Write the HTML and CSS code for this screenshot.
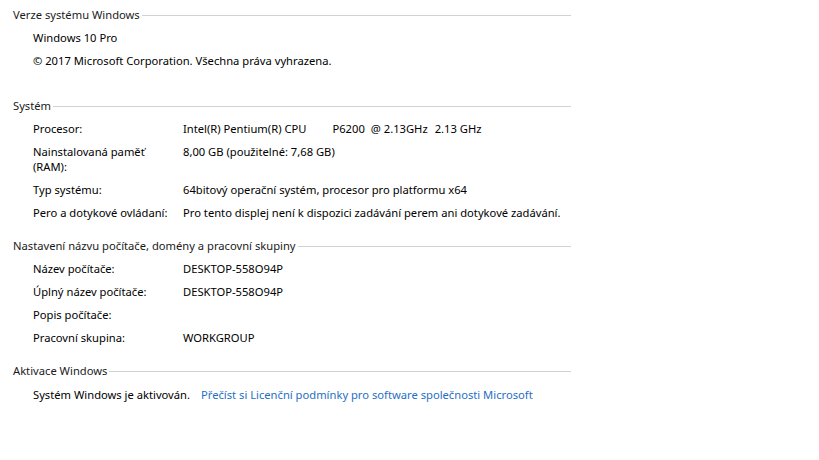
FILE: index.html
```html
<!DOCTYPE html>
<html lang="cs">
<head>
  <meta charset="UTF-8" />
  <title>Systém</title>
  <link rel="stylesheet" href="styles.css">
</head>
<body>

<section class="group first">
  <div class="group-head"><span>Verze systému Windows</span></div>
  <div class="plain">Windows 10 Pro</div>
  <div class="plain">© 2017 Microsoft Corporation. Všechna práva vyhrazena.</div>
</section>

<section class="group">
  <div class="group-head"><span>Systém</span></div>
  <div class="row">
    <div class="label">Procesor:</div>
    <div class="value cpu"><span>Intel(R) Pentium(R) CPU</span><span class="model">P6200</span><span class="at">@ 2.13GHz</span><span class="freq">2.13 GHz</span></div>
  </div>
  <div class="row"><div class="label">Nainstalovaná paměť (RAM):</div><div class="value">8,00 GB (použitelné: 7,68 GB)</div></div>
  <div class="row"><div class="label">Typ systému:</div><div class="value">64bitový operační systém, procesor pro platformu x64</div></div>
  <div class="row"><div class="label">Pero a dotykové ovládaní:</div><div class="value">Pro tento displej není k dispozici zadávání perem ani dotykové zadávání.</div></div>
</section>

<section class="group">
  <div class="group-head"><span>Nastavení názvu počítače, domény a pracovní skupiny</span></div>
  <div class="row"><div class="label">Název počítače:</div><div class="value">DESKTOP-558O94P</div></div>
  <div class="row"><div class="label">Úplný název počítače:</div><div class="value">DESKTOP-558O94P</div></div>
  <div class="row"><div class="label">Popis počítače:</div><div class="value"></div></div>
  <div class="row"><div class="label">Pracovní skupina:</div><div class="value">WORKGROUP</div></div>
</section>

<section class="group">
  <div class="group-head"><span>Aktivace Windows</span></div>
  <div class="plain activation">
    <span>Systém Windows je aktivován.</span>
    <a href="#" class="link">Přečíst si Licenční podmínky pro software společnosti Microsoft</a>
  </div>
</section>

</body>
</html>
```

FILE: styles.css
```css
body {
  margin: 0;
  padding: 7px 0 0 13px;
  background: #fff;
  color: #000;
  font-family: 'Noto Sans', sans-serif;
  font-size: 11.2px;
  line-height: 15px;
}

.group {
  width: 558px;
  margin-bottom: 18px;
}

.group.first {
  margin-bottom: 30px;
}

.group-head {
  display: flex;
  align-items: center;
  gap: 2px;
  color: #1a1a1a;
  height: 15px;
  margin-bottom: 4px;
}

.group-head span {
  white-space: nowrap;
}

.group-head::after {
  content: "";
  flex: 1;
  height: 1px;
  margin-top: 2px;
  background: #d2d2d2;
}

.plain,
.row {
  margin: 8px 0 0 20px;
}

.row {
  display: grid;
  grid-template-columns: 150px 1fr;
  min-height: 15px;
}

.label {
  width: 140px;
}

.value {
  white-space: nowrap;
}

.cpu .model {
  margin-left: 26px;
}

.cpu .at {
  margin-left: 6px;
}

.cpu .freq {
  margin-left: 7px;
}

.activation {
  display: flex;
  gap: 11px;
  margin-top: 9px;
}

.link {
  color: #1f6fc5;
  text-decoration: none;
}
```
